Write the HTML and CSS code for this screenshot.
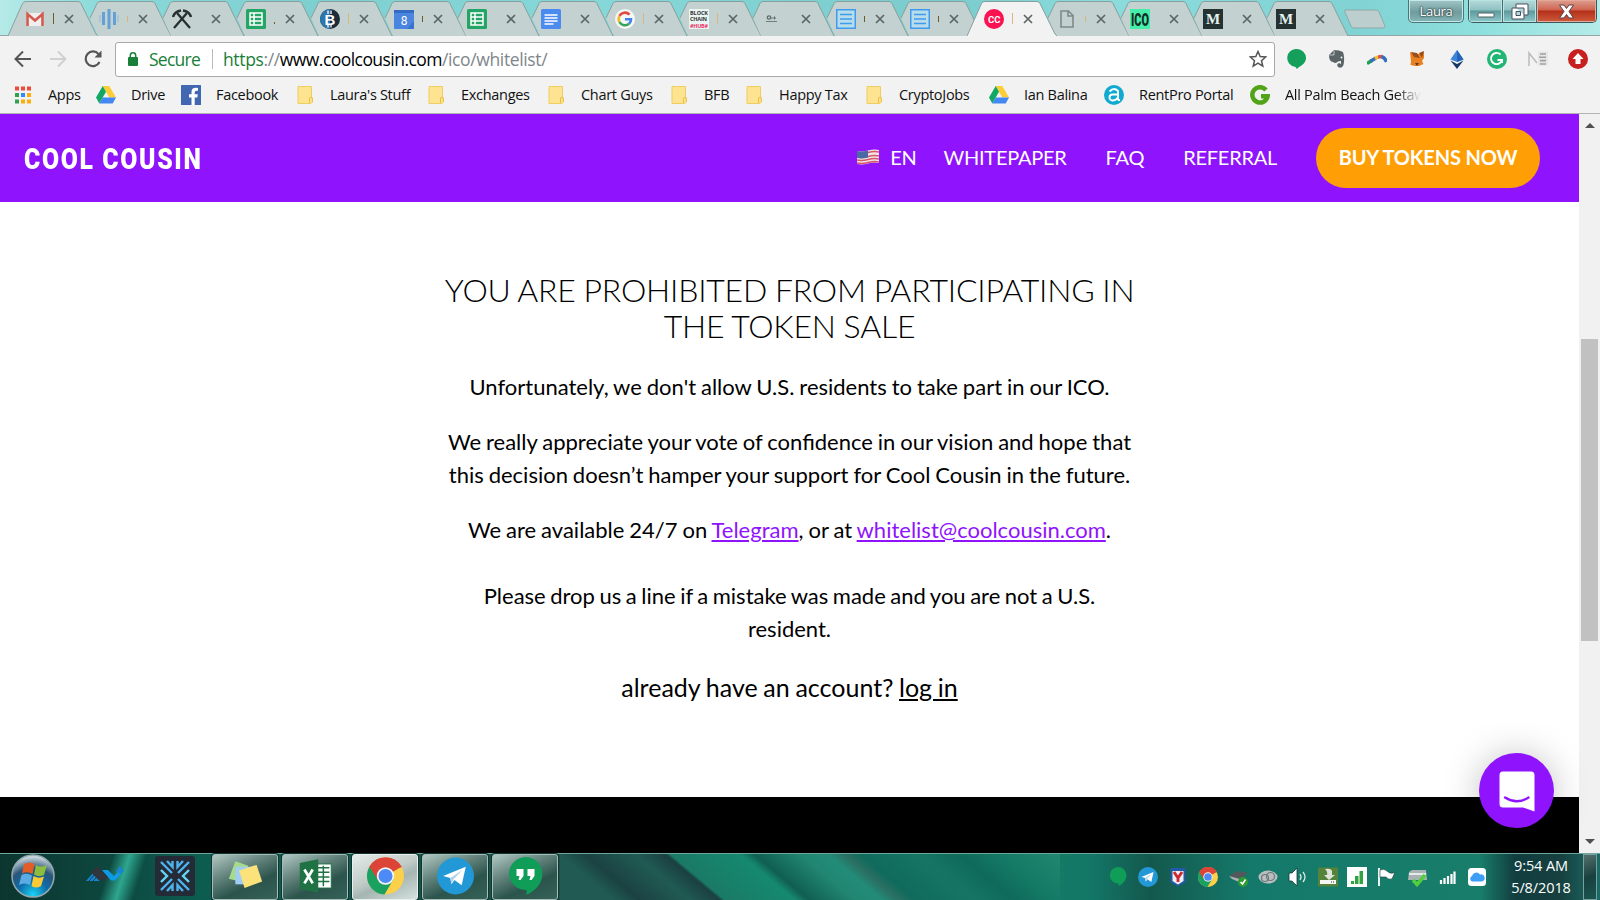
FILE: index.html
```html
<!DOCTYPE html>
<html lang="en">
<head>
    <meta charset="UTF-8">
    <meta name="viewport" content="width=device-width, initial-scale=1.0">
    <title>Cool Cousin - Whitelist</title>
    <link rel="stylesheet" href="styles.css">
</head>
<body>
    <!-- shared icons -->
    <svg class="sprite" width="0" height="0">
        <symbol id="tab" viewBox="0 0 90 36">
            <path d="M8 18 L15 3.500 Q16 1.500 18 1.500 H70 Q72 1.500 73 3.500 L88 34 L89 36 H16 Z" fill="#c3d2d1"/>
            <path d="M8 18 L15 3.500 Q16 1.500 18 1.500 H70 Q72 1.500 73 3.500 L88 34 L89 36" fill="none" stroke="#87a09f"/>
        </symbol>
        <symbol id="tab-full" viewBox="0 0 90 36">
            <path d="M0 36 L14.500 3.500 Q15.500 1.500 18 1.500 H70 Q72 1.500 73 3.500 L88 34 L90 36" fill="currentColor" stroke="#87a09f"/>
        </symbol>
        <symbol id="x" viewBox="0 0 10 10"><path d="M1 1 L9 9 M9 1 L1 9" stroke="#5b6665" stroke-width="1.700"/></symbol>
        <symbol id="sheet" viewBox="0 0 20 20">
            <rect width="20" height="20" rx="1.500" fill="#23a566"/>
            <path d="M4 4 H16 V16 H4 Z M4 8 H16 M4 12 H16 M8 4 V16" fill="none" stroke="#fff" stroke-width="1.500"/>
        </symbol>
        <symbol id="list" viewBox="0 0 20 20">
            <rect x="0.750" y="0.750" width="18.500" height="18.500" fill="#b9dcea" stroke="#3d9bf0" stroke-width="1.500"/>
            <path d="M4 5.500 H16 M4 10 H16 M4 14.500 H16" stroke="#3d9bf0" stroke-width="1.400"/>
        </symbol>
        <symbol id="folder" viewBox="0 0 16 18">
            <path d="M1 0.500 H14.500 V11 L15.500 12 V16 L14 17.500 H1 Z" fill="#fee391" stroke="#f0cd62"/>
            <path d="M12.500 17 V12 Q14 10.500 15.300 12 V16" fill="#fee391" stroke="#eabf45"/>
        </symbol>
        <symbol id="drive" viewBox="0 0 20 18">
            <path d="M6.700 0 L13.300 0 L20 11.500 H13.300 Z" fill="#fccd35"/>
            <path d="M6.700 0 L10 5.800 L3.300 17.400 L0 11.600 Z" fill="#11a861"/>
            <path d="M6.700 11.500 H20 L16.700 17.400 H3.300 Z" fill="#4387f5"/>
        </symbol>
        <symbol id="chrome" viewBox="0 0 36 36">
            <circle cx="18" cy="18" r="18" fill="#fdd04a"/>
            <path d="M18 18 L2.400 9 A18 18 0 0 1 33.600 9 Z" fill="#dc4437"/>
            <path d="M18 18 L2.400 9 A18 18 0 0 0 17 36 L26 21 Z" fill="#1aa15f"/>
            <path d="M18 9.500 H34 L33.600 9 A18 18 0 0 0 2.400 9 L10.500 22 Z" fill="#dc4437"/>
            <circle cx="18" cy="18" r="8.500" fill="#f3f3f3"/>
            <circle cx="18" cy="18" r="6.800" fill="#4c8bf5"/>
        </symbol>
        <symbol id="telegram" viewBox="0 0 36 36">
            <circle cx="18" cy="18" r="18" fill="#2398d6"/>
            <path d="M6 18 L28 9 L24 27 L17 22 L14 26 L13 20 Z" fill="#fff"/>
            <path d="M13 20 L25 12 L16 21.500 L14 26 Z" fill="#b4d3e6"/>
        </symbol>
        <symbol id="hangouts" viewBox="0 0 34 38">
            <path d="M17 0 A17 16.500 0 0 1 34 16.500 C34 27 26 34 18 38 V33 A17 16.500 0 0 1 17 0 Z" fill="#109d58"/>
        </symbol>
    </svg>

    <div class="tab-strip">
        <div class="tabs">
            <div class="tab">
                <svg class="tab-shape"><use href="#tab-full"/></svg>
                <svg class="favicon" viewBox="0 0 20 20"><rect x="1" y="4" width="18" height="13" fill="#efefef"/><path d="M2.500 17 V5 L10 11.500 L17.500 5 V17" fill="none" stroke="#d35a4f" stroke-width="2.600"/></svg>
                <i class="sliver dark"></i>
                <svg class="close"><use href="#x"/></svg>
            </div>
            <div class="tab">
                <svg class="tab-shape"><use href="#tab"/></svg>
                <svg class="favicon" viewBox="0 0 20 20"><path d="M4.500 3 V16 M10 0 V20 M15.500 3 V16" stroke="#62a0d6" stroke-width="3"/><path d="M1 6 V13 M19 6 V13" stroke="#8ebadc"/></svg>
                <i class="sliver short"></i>
                <svg class="close"><use href="#x"/></svg>
            </div>
            <div class="tab">
                <svg class="tab-shape"><use href="#tab"/></svg>
                <svg class="favicon" viewBox="0 0 20 20"><path d="M2 19 L15 4 M18 19 L5 4" stroke="#26302f" stroke-width="2.300"/><path d="M1 8 Q2.500 2.500 9 1.500 M11 1.500 Q17.500 2.500 19 8" fill="none" stroke="#26302f" stroke-width="2.500"/></svg>
                <i class="sliver none"></i>
                <svg class="close"><use href="#x"/></svg>
            </div>
            <div class="tab">
                <svg class="tab-shape"><use href="#tab"/></svg>
                <svg class="favicon"><use href="#sheet"/></svg>
                <i class="sliver dot"></i>
                <svg class="close"><use href="#x"/></svg>
            </div>
            <div class="tab">
                <svg class="tab-shape"><use href="#tab"/></svg>
                <svg class="favicon" viewBox="0 0 20 20"><circle cx="10" cy="10" r="10" fill="#1b2b3a"/><path d="M10 0 A10 10 0 0 0 10 20 Z" fill="#2c75ad"/><text x="10" y="15.500" text-anchor="middle" font-family="Liberation Sans, sans-serif" font-weight="bold" font-size="15" fill="#fff">B</text><path d="M8 1.500 V5 M11 1.500 V5 M8 15 V18.500 M11 15 V18.500" stroke="#fff" stroke-width="1.300"/></svg>
                <i class="sliver"></i>
                <svg class="close"><use href="#x"/></svg>
            </div>
            <div class="tab">
                <svg class="tab-shape"><use href="#tab"/></svg>
                <svg class="favicon" viewBox="0 0 20 20"><rect y="1" width="20" height="19" fill="#4a85e0"/><path d="M0 1 H20 V4 H0 Z" fill="#346bc3"/><path d="M13 20 L20 12 V20 Z" fill="#3a73cf"/><text x="10" y="16" text-anchor="middle" font-family="Roboto, sans-serif" font-size="12" fill="#fff">8</text></svg>
                <i class="sliver dark short"></i>
                <svg class="close"><use href="#x"/></svg>
            </div>
            <div class="tab">
                <svg class="tab-shape"><use href="#tab"/></svg>
                <svg class="favicon"><use href="#sheet"/></svg>
                <i class="sliver none"></i>
                <svg class="close"><use href="#x"/></svg>
            </div>
            <div class="tab">
                <svg class="tab-shape"><use href="#tab"/></svg>
                <svg class="favicon" viewBox="0 0 20 20"><rect width="20" height="20" rx="1.500" fill="#4b8bf0"/><path d="M3.500 6 H16.500 M3.500 9 H16.500 M3.500 12 H16.500 M3.500 15 H12.500" stroke="#fff" stroke-width="1.300"/></svg>
                <i class="sliver none"></i>
                <svg class="close"><use href="#x"/></svg>
            </div>
            <div class="tab">
                <svg class="tab-shape"><use href="#tab"/></svg>
                <svg class="favicon" viewBox="0 0 20 20"><circle cx="10" cy="10" r="10" fill="#f4f7f7"/><g fill="none" stroke-width="2.600"><path d="M4.500 6.800 A6.200 6.200 0 0 1 14.500 5.700" stroke="#e04a3f"/><path d="M4.500 6.800 A6.200 6.200 0 0 0 4.500 13" stroke="#f2bb2e"/><path d="M4.500 13 A6.200 6.200 0 0 0 14 14.800" stroke="#34a456"/><path d="M14 14.800 A6 6 0 0 0 16 10.200 H10" stroke="#4282ec"/></g></svg>
                <i class="sliver"></i>
                <svg class="close"><use href="#x"/></svg>
            </div>
            <div class="tab">
                <svg class="tab-shape"><use href="#tab"/></svg>
                <svg class="favicon" viewBox="0 0 20 20"><rect width="20" height="20" fill="#e9f5f3"/><g font-family="Open Sans, sans-serif" font-weight="bold" font-size="5.500" fill="#333"><text x="1" y="6" textLength="18">BLOCK</text><text x="1" y="12" textLength="17">CHAIN</text><text x="1" y="18.500" textLength="18" fill="#ee3065">#HUB#</text></g></svg>
                <i class="sliver"></i>
                <svg class="close"><use href="#x"/></svg>
            </div>
            <div class="tab">
                <svg class="tab-shape"><use href="#tab"/></svg>
                <svg class="favicon" viewBox="0 0 20 20"><path d="M4 12.500 H15 M9 9 H14" stroke="#6f7d7c"/><circle cx="7" cy="8.500" r="1.700" fill="none" stroke="#5f6a69" stroke-width="1.300"/><path d="M12.500 7.500 V10.500" stroke="#5f6a69"/></svg>
                <i class="sliver none"></i>
                <svg class="close"><use href="#x"/></svg>
            </div>
            <div class="tab">
                <svg class="tab-shape"><use href="#tab"/></svg>
                <svg class="favicon"><use href="#list"/></svg>
                <i class="sliver dark short"></i>
                <svg class="close"><use href="#x"/></svg>
            </div>
            <div class="tab">
                <svg class="tab-shape"><use href="#tab"/></svg>
                <svg class="favicon"><use href="#list"/></svg>
                <i class="sliver dark short"></i>
                <svg class="close"><use href="#x"/></svg>
            </div>
            <div class="tab active">
                <svg class="tab-shape"><use href="#tab-full"/></svg>
                <svg class="favicon" viewBox="0 0 20 20"><circle cx="10" cy="10" r="10" fill="#fb1250"/><text x="4" y="13.500" font-family="Roboto, sans-serif" font-weight="bold" font-size="9.500" textLength="12.500" fill="#fff">CC</text></svg>
                <i class="sliver"></i>
                <svg class="close"><use href="#x"/></svg>
            </div>
            <div class="tab">
                <svg class="tab-shape"><use href="#tab"/></svg>
                <svg class="favicon" viewBox="0 0 20 20"><path d="M4 2 H11.500 L16 6.500 V18 H4 Z M11 2 V7 H16" fill="none" stroke="#7f8988" stroke-width="1.600"/></svg>
                <i class="sliver short"></i>
                <svg class="close"><use href="#x"/></svg>
            </div>
            <div class="tab">
                <svg class="tab-shape"><use href="#tab"/></svg>
                <svg class="favicon ico" viewBox="0 0 20 20"><rect width="20" height="20" fill="#45efa9"/><text x="1" y="16.500" textLength="18" lengthAdjust="spacingAndGlyphs" font-family="Roboto, sans-serif" font-weight="900" font-size="18" fill="#142b25">ICO</text></svg>
                <i class="sliver none"></i>
                <svg class="close"><use href="#x"/></svg>
            </div>
            <div class="tab">
                <svg class="tab-shape"><use href="#tab"/></svg>
                <svg class="favicon" viewBox="0 0 20 20"><rect width="20" height="20" fill="#263131"/><text x="10" y="15" text-anchor="middle" font-family="Liberation Serif, serif" font-weight="bold" font-size="15" fill="#e4f1ef">M</text></svg>
                <i class="sliver none"></i>
                <svg class="close"><use href="#x"/></svg>
            </div>
            <div class="tab">
                <svg class="tab-shape"><use href="#tab"/></svg>
                <svg class="favicon" viewBox="0 0 20 20"><rect width="20" height="20" fill="#263131"/><text x="10" y="15" text-anchor="middle" font-family="Liberation Serif, serif" font-weight="bold" font-size="15" fill="#e4f1ef">M</text></svg>
                <i class="sliver none"></i>
                <svg class="close"><use href="#x"/></svg>
            </div>
        </div>
        <svg class="new-tab" viewBox="0 0 42 20"><path d="M1 1 H32 Q34 1 35 3 L41 17 Q41 19 39 19 H10 Q8 19 7 17 L0.500 2 Z" fill="#bccfce" stroke="#8fa9a8"/></svg>
        <div class="window-controls">
            <div class="user">Laura</div>
            <div class="control-group">
                <button class="minimize"><svg width="18" height="6"><rect x="1" y="1" width="16" height="4" rx="0.500" fill="#fff" stroke="#4f6264"/></svg></button>
                <button class="restore"><svg width="18" height="17" viewBox="0 0 18 17"><path d="M5 1 H17 V12 H13 V16 H1 V5 H5 Z" fill="#fff" stroke="#4a5064"/><path d="M5 5 H13 V12 M5 8.500 H9.500 V12.500 H5 Z" fill="#b4d8d8" stroke="#4a5064"/></svg></button>
                <button class="quit"><svg width="17" height="15" viewBox="0 0 17 15"><path d="M1.500 1 H6 L8.500 4.500 L11 1 H15.500 L11 7.500 L15.500 14 H11 L8.500 10.500 L6 14 H1.500 L6 7.500 Z" fill="#fff" stroke="#5a4048"/></svg></button>
            </div>
        </div>
    </div>

    <div class="toolbar">
        <div class="nav-buttons">
            <svg viewBox="0 0 18 18"><path d="M17 9 H2 M9 1.500 L1.500 9 L9 16.500" fill="none" stroke="#555" stroke-width="2"/></svg>
            <svg viewBox="0 0 18 18"><path d="M1 9 H16 M9 1.500 L16.500 9 L9 16.500" fill="none" stroke="#d0d0d0" stroke-width="2"/></svg>
            <svg viewBox="0 0 18 18"><path d="M15.500 12 A7.300 7.300 0 1 1 14.500 4" fill="none" stroke="#555" stroke-width="2.200"/><path d="M17.500 0.500 V7.500 H10.500 Z" fill="#555"/></svg>
        </div>
        <div class="address-bar">
            <svg class="lock" viewBox="0 0 10 14"><rect y="5" width="10" height="9" rx="1" fill="#188038"/><path d="M2.300 6 V3.500 A2.700 2.700 0 0 1 7.700 3.500 V6" fill="none" stroke="#188038" stroke-width="1.500"/></svg>
            <span class="secure">Secure</span>
            <span class="url"><span class="https">https</span>://<b>www.coolcousin.com</b>/ico/whitelist/</span>
            <svg class="star" viewBox="0 0 18 18"><path d="M9 1.500 L11.200 6.600 L16.700 7 L12.500 10.700 L13.800 16.200 L9 13.200 L4.200 16.200 L5.500 10.700 L1.300 7 L6.800 6.600 Z" fill="none" stroke="#555" stroke-width="1.500"/></svg>
        </div>
        <div class="extensions">
            <svg viewBox="0 0 20 20"><path d="M10 0 A9 9 0 0 1 19 9 C19 13 16 16 12 18 L10 20 L8.500 18 A9 9 0 0 1 10 0 Z" fill="#149f5a"/></svg>
            <svg viewBox="0 0 20 20"><path d="M2 6 L7 1 L12 1.500 L16 3 Q18 9 16.500 16 Q15 20 11 18 Q9 15 12 14 L14 15 V12 L11 12.500 Q9 15 6 13 Q2 13 2 6 Z" fill="#5b6568"/><path d="M2.500 6 H7 V1.500" fill="none" stroke="#f1f1f1" stroke-width="0.700"/><circle cx="14.500" cy="8.500" r="1" fill="#f1f1f1"/></svg>
            <svg viewBox="0 0 20 20"><g fill="none" stroke-width="3.500"><path d="M0 14.500 L5 11.500" stroke="#21a150"/><path d="M3.500 12.200 L9 9" stroke="#3370bd"/><path d="M8 9.500 L11 8" stroke="#f8bd28"/><path d="M11 8 L15 7.500" stroke="#df5140"/><path d="M14.500 7.500 Q18 8.500 19.500 13" stroke="#3370bd"/></g></svg>
            <svg viewBox="0 0 20 20"><path d="M3 3 L8 5 H13 L17 2.500 V9 L15 12 L16.500 15 L12 17 H8 L3.500 16 L4 12 Z" fill="#e88121"/><path d="M4 3 L10 4 L13 9 L7 8 Z M12 4 L17 2 L15 9 Z" fill="#9a4d1c"/><path d="M8 14 H12 L10 17 Z" fill="#5b3a28"/></svg>
            <svg viewBox="0 0 20 20"><path d="M10 1 L16.500 10.500 L10 13 L3.500 10.500 Z" fill="#3c85db"/><path d="M10 1 L16.500 10.500 L10 13 Z" fill="#2463b8"/><path d="M3.500 11.500 L10 15 L16.500 11.500 L10 20 Z" fill="#143763"/></svg>
            <svg viewBox="0 0 20 20"><circle cx="10" cy="10" r="10" fill="#23b574"/><path d="M13.500 5.500 A5.600 5.600 0 1 0 15 11 H10.500 M15 11 V14" fill="none" stroke="#fff" stroke-width="1.900"/></svg>
            <svg viewBox="0 0 20 20"><rect x="10" y="2.500" width="10" height="14" fill="#e6e6e6"/><path d="M1 17 V4 L9 14" fill="none" stroke="#bdbdbd" stroke-width="1.600"/><path d="M12 5 H18 M11 8.300 H18 M12 11.600 H18 M12 15 H18" stroke="#a0a0a0" stroke-width="1.600"/></svg>
            <svg viewBox="0 0 20 20"><circle cx="10" cy="10" r="10" fill="#c81f1f"/><path d="M10 4 L15.500 10 H12.500 V15 H7.500 V10 H4.500 Z" fill="#fff"/></svg>
        </div>
    </div>

    <div class="bookmarks">
        <a><svg viewBox="0 0 20 20"><g fill="#ef4a3d"><path d="M2 1.500h4v4h-4z M8 1.500h4v4h-4z M14 1.500h4v4h-4z"/></g><path d="M2 8h4v4h-4z M2 14.500h4v4h-4z" fill="#31a04f"/><path d="M8 8h4v4h-4z" fill="#2e8df5"/><path d="M14 8h4v4h-4z M8 14.500h4v4h-4z M14 14.500h4v4h-4z" fill="#f9ae0b"/></svg>Apps</a>
        <a><svg><use href="#drive" y="1" width="20" height="18"/></svg>Drive</a>
        <a><svg viewBox="0 0 20 20"><rect width="20" height="20" rx="0.500" fill="#4267b2"/><path d="M13.700 20 V12.500 H16.300 L16.800 9.300 H13.700 V7.300 Q13.700 5.700 15.400 5.700 H17 V3 Q10.500 2 10.500 7 V9.300 H8 V12.500 H10.500 V20 Z" fill="#fff"/></svg>Facebook</a>
        <a><svg><use href="#folder" x="2" y="1" width="16" height="18"/></svg>Laura's Stuff</a>
        <a><svg><use href="#folder" x="2" y="1" width="16" height="18"/></svg>Exchanges</a>
        <a><svg><use href="#folder" x="2" y="1" width="16" height="18"/></svg>Chart Guys</a>
        <a><svg><use href="#folder" x="2" y="1" width="16" height="18"/></svg>BFB</a>
        <a><svg><use href="#folder" x="2" y="1" width="16" height="18"/></svg>Happy Tax</a>
        <a><svg><use href="#folder" x="2" y="1" width="16" height="18"/></svg>CryptoJobs</a>
        <a><svg><use href="#drive" y="1" width="20" height="18"/></svg>Ian Balina</a>
        <a><svg viewBox="0 0 20 20"><circle cx="10" cy="10" r="10" fill="#10aad0"/><path d="M5.500 6.500 Q10 2 14 6 V14 Q14 15.500 16 15 M14 9.500 H8.500 A3 3 0 0 0 8.500 15.500 Q12 15.500 14 12.500" fill="none" stroke="#fff" stroke-width="1.900"/></svg>RentPro Portal</a>
        <a class="fade"><svg viewBox="0 0 20 20"><path d="M16 5 A7.700 7.700 0 1 0 17.600 11.300 H11" fill="none" stroke="#53a318" stroke-width="4.500"/></svg>All Palm Beach Getaw</a>
    </div>

    <div class="viewport">
        <div class="page">
            <header>
                <div class="logo"><span>COOL COUSIN</span></div>
                <nav>
                    <a class="lang">
                        <svg viewBox="0 0 24 16"><path d="M1 2 Q6 3 12 1.500 T23 1 V14 Q18 13 12 14.500 T1 15 Z" fill="#f2e4e6"/><path d="M1 4 Q6 5 12 3.500 T23 3 M1 8 Q6 9 12 7.500 T23 7 M1 11 Q6 12 12 10.500 T23 10 M1 14 Q6 15 12 13.500 T23 13" fill="none" stroke="#d4566a" stroke-width="1.500"/><path d="M1 2 Q6 3 12 1.500 V8.500 Q6 10 1 9 Z" fill="#4a6aa5"/></svg>
                        EN
                    </a>
                    <a>WHITEPAPER</a>
                    <a>FAQ</a>
                    <a>REFERRAL</a>
                    <a class="buy">BUY TOKENS NOW</a>
                </nav>
            </header>
            <main>
                <h1>YOU ARE PROHIBITED FROM PARTICIPATING IN<br>THE TOKEN SALE</h1>
                <p>Unfortunately, we don't allow U.S. residents to take part in our ICO.</p>
                <p>We really appreciate your vote of confidence in our vision and hope that<br>this decision doesn’t hamper your support for Cool Cousin in the future.</p>
                <p>We are available 24/7 on <a href="#">Telegram</a>, or at <a href="#">whitelist@coolcousin.com</a>.</p>
                <p class="note">Please drop us a line if a mistake was made and you are not a U.S.<br>resident.</p>
                <p class="login">already have an account? <a href="#">log in</a></p>
            </main>
            <footer></footer>
            <button class="chat"><svg viewBox="0 0 36 41"><path d="M4 0.500 H32 Q35.500 0.500 35.500 4 V40.500 L24 36.500 H4 Q0.500 36.500 0.500 33 V4 Q0.500 0.500 4 0.500 Z" fill="#fff"/><path d="M6 26.500 Q18 34 29.500 26.500" fill="none" stroke="#8f13fd" stroke-width="2.300" stroke-linecap="round"/></svg></button>
        </div>
        <div class="scrollbar">
            <svg width="10" height="5"><path d="M0 5 L5 0 L10 5 Z" fill="#505050"/></svg>
            <div class="track"><div class="thumb"></div></div>
            <svg width="10" height="5"><path d="M0 0 L5 5 L10 0 Z" fill="#505050"/></svg>
        </div>
    </div>

    <div class="taskbar">
        <div class="start"><svg viewBox="0 0 44 44"><defs><radialGradient id="orb" cx="50%" cy="95%" r="90%"><stop offset="0" stop-color="#17d5f5"/><stop offset="0.400" stop-color="#0f6ba8"/><stop offset="0.700" stop-color="#2b5576"/><stop offset="1" stop-color="#c5d3da"/></radialGradient></defs><circle cx="22" cy="22" r="21" fill="url(#orb)" stroke="#93a9b2" stroke-width="1.500"/><path d="M13 10 Q18 7 23.500 10 L21.500 20 Q16 17 11 19.500 Z" fill="#e35d26"/><path d="M25 11 Q30 14 36 11 L33 21 Q28 23.500 23 20.500 Z" fill="#8cbd3d"/><path d="M10.500 21 Q16 18.500 21 21.500 L19 31 Q13 28 8 31 Z" fill="#5cabe2"/><path d="M22.500 22 Q28 25 33 22.500 L30 32 Q25 35 20.500 32 Z" fill="#fbc934"/></svg></div>
        <div class="pinned">
            <svg width="38" height="20" viewBox="0 0 38 20"><path d="M0 15 L7 7 L14 15 Z" fill="#1686d9"/><path d="M3 15 L8.500 8.500 M7 15 L10.500 11" stroke="#10443f" stroke-width="1"/><path d="M5 6.500 L12 0 L22 12 L18 14.500 H13 Z" fill="#30363b"/><path d="M16 4 H22 L28 10 L33 5 L35 8 L29 14.500 H25 Z" fill="#0f9ae8"/><path d="M30 5 L34 0 L38 5 L34.500 8 Z" fill="#1a83cf"/></svg>
            <svg width="40" height="40" viewBox="0 0 40 40"><rect width="40" height="40" rx="3" fill="#242b36"/><g fill="none" stroke="#4fb3f0" stroke-width="2.400"><path d="M6 6 L17 17 M34 6 L23 17 M6 34 L17 23 M34 34 L23 23"/><path d="M12 5 L17.500 11 V5 M28 5 L22.500 11 V5 M12 35 L17.500 29 V35 M28 35 L22.500 29 V35"/><path d="M6 14 L12 20 L6 26 M34 14 L28 20 L34 26" stroke="#63d6f5"/></g></svg>
        </div>
        <div class="task-buttons">
            <div class="task"><svg viewBox="0 0 40 38"><path d="M9 3 L23 8 L18 26 L2 22 Z" fill="#a6db8a"/><path d="M9 9 H28 V28 H9 Z" fill="#9fcdf4"/><path d="M13 13 L32 7 L38 25 L19 32 Z" fill="#fce27a"/></svg></div>
            <div class="task"><svg viewBox="0 0 40 38"><rect x="20" y="6" width="17" height="26" fill="#fff" stroke="#1f7244"/><path d="M22 10 H35 M22 15 H35 M22 20 H35 M22 25 H35 M28.500 8 V30" stroke="#1f7244" stroke-width="1.600"/><path d="M3 5 L23 1 V37 L3 33 Z" fill="#1f7244"/><path d="M8 12 L17 27 M17 12 L8 27" stroke="#fff" stroke-width="3"/></svg></div>
            <div class="task current"><svg><use href="#chrome"/></svg></div>
            <div class="task"><svg><use href="#telegram"/></svg></div>
            <div class="task"><svg viewBox="0 0 34 38"><use href="#hangouts"/><path d="M8 12 H15 V19 L12 23 H10 L11 19 H8 Z M19 12 H26 V19 L23 23 H21 L22 19 H19 Z" fill="#fff"/></svg></div>
        </div>
        <div class="tray">
            <svg viewBox="0 0 20 20"><use href="#hangouts" width="20" height="19"/></svg>
            <svg><use href="#telegram"/></svg>
            <svg viewBox="0 0 20 20"><path d="M2.500 1 H17.500 V15 L10 19.500 L2.500 15 Z" fill="#2458a8"/><path d="M4.500 4 H15.500 V14 L10 17.500 L4.500 14 Z" fill="#eaf0f4"/><path d="M6 5 L10 11 L14 5 M10 10 V15" fill="none" stroke="#d22630" stroke-width="2.800"/></svg>
            <svg><use href="#chrome"/></svg>
            <svg viewBox="0 0 20 20"><path d="M1 9 L9 4 L20 6 L12 12 Z" fill="#53595b"/><path d="M1 9 L12 12 L11 15 L4 12 Z" fill="#a9b1b2"/><circle cx="15" cy="15" r="5" fill="#2e9b35"/><path d="M12.500 15 L14.500 17 L17.500 12.500" fill="none" stroke="#fff" stroke-width="1.500"/></svg>
            <svg viewBox="0 0 20 20"><ellipse cx="10" cy="10" rx="9.500" ry="6.500" fill="#b9bebf"/><g fill="none" stroke="#6d7879" stroke-width="1.200"><circle cx="7" cy="11" r="3.500"/><circle cx="12.500" cy="9.500" r="4"/></g></svg>
            <svg viewBox="0 0 20 20"><path d="M1 6 H4 L9 1 V19 L4 14 H1 Z" fill="#fff" stroke="#173a35" stroke-width="0.800"/><path d="M12 7 Q14 10 12 13 M15 5 Q19 10 15 15" fill="none" stroke="#d8e8e5" stroke-width="1.300"/></svg>
            <svg viewBox="0 0 20 20"><rect y="0.500" width="20" height="19" rx="1" fill="#55833b"/><path d="M7 2 Q13 1 14 4 V8 H17 L11 13 L6 8 H9 Q10 5 7 2 Z" fill="#dce4da"/><rect x="2" y="13" width="16" height="4" fill="#f3f6f2"/><path d="M13 15 H17" stroke="#333" stroke-dasharray="1 1"/></svg>
            <svg viewBox="0 0 20 20"><rect width="20" height="20" fill="#fff"/><path d="M4 14 H7 V17 H4 Z M8 9 H11.500 V17 H8 Z M12.500 4 H16 V17 H12.500 Z" fill="#2fa53f"/></svg>
            <svg viewBox="0 0 20 20"><path d="M2 1 V19" stroke="#fff" stroke-width="1.800"/><path d="M3 3 Q7 1 10 4 Q14 8 18 5 L15 12 Q11 13 9 10 H3 Z" fill="#fff" stroke="#173a35" stroke-width="0.600"/></svg>
            <svg viewBox="0 0 20 20"><path d="M2 5 L5 3 H19 L20 13 H1 Z" fill="#aab3b3"/><path d="M2 7 H19" stroke="#e7eaea" stroke-width="2"/><path d="M6 13 L10 17.500 L18 8" fill="none" stroke="#52cf3e" stroke-width="3.500"/></svg>
            <svg viewBox="0 0 20 20"><path d="M4 17 V13 M7.500 17 V11 M11 17 V9 M14.500 17 V7 M17.500 17 V4.500" stroke="#fff" stroke-width="2.200"/></svg>
            <svg viewBox="0 0 20 20"><rect x="1" y="1" width="18" height="18" rx="3.500" fill="#fff"/><path d="M5 14.500 A3 3 0 0 1 5 9 A4.500 4.500 0 0 1 13 7.500 A3.600 3.600 0 0 1 15 14.500 Z" fill="#3e9df5"/></svg>
        </div>
        <div class="clock"><span>9:54 AM</span><span>5/8/2018</span></div>
        <div class="show-desktop"></div>
    </div>
</body>
</html>
```

FILE: styles.css
```css
* {
    margin: 0;
    padding: 0;
    box-sizing: border-box;
}

body {
    width: 1600px;
    height: 900px;
    overflow: hidden;
    display: flex;
    flex-direction: column;
    font-family: "Open Sans", sans-serif;
    background: #fff;
}

svg {
    display: block;
    flex: none;
}

button {
    border: none;
    background: none;
}

.sprite {
    position: absolute;
}

/* tabs */
.tab-strip {
    height: 36px;
    flex: none;
    display: flex;
    padding-left: 8px;
    background: linear-gradient(90deg, #b5eae8 0, #8bdada 100px, #7ecfd0 300px, #86d8d8 600px, #79cbcc 950px, #8cdcdc 1100px, #80d2d3 1350px, #8ee0de 1480px, #b5ebe8 1600px);
    border-bottom: 1px solid #93a5a4;
}

.tabs {
    display: flex;
    color: #c3d2d1;
}

.tab {
    position: relative;
    width: 90px;
    height: 36px;
    margin-right: -16.28px;
    padding: 9px 0 0 17px;
    display: flex;
    flex: none;
}

.tab.active {
    z-index: 1;
    color: #f2f2f2;
}

.tab.active ~ .tab {
    margin-right: -17.2px;
}

.tab-shape {
    position: absolute;
    left: 0;
    top: 0;
    width: 90px;
    height: 36px;
}

.favicon {
    position: relative;
    width: 20px;
    height: 20px;
}

.favicon.ico {
    overflow: visible;
}

.sliver {
    width: 1px;
    height: 11px;
    margin: 4px 10px 0 8px;
    background: #d9b67c;
    position: relative;
}

.sliver.dark {
    background: #6e5a2c;
}

.sliver.short {
    height: 6px;
    margin-top: 7px;
}

.sliver.dot {
    height: 2px;
    margin-top: 13px;
    background: #6e5a2c;
}

.sliver.none {
    background: none;
}

.close {
    position: relative;
    width: 10px;
    height: 10px;
    margin-top: 5px;
}

.new-tab {
    width: 42px;
    height: 20px;
    margin: 9px 0 0 12px;
}

.window-controls {
    margin-left: auto;
    margin-right: 3px;
    display: flex;
    gap: 4px;
}

.user {
    width: 56px;
    height: 23px;
    border: 1px solid #4f7476;
    border-top: none;
    border-radius: 0 0 5px 5px;
    box-shadow: inset 0 0 0 1px #c3eaea;
    background: linear-gradient(#a3c6c7, #6f9c9e 55%, #84b5b6);
    color: #fff;
    font-size: 13px;
    letter-spacing: -0.3px;
    line-height: 22px;
    text-align: center;
    text-shadow: 0 0 2px #233, 0 0 2px #233;
}

.control-group {
    display: flex;
    height: 23px;
    border: 1px solid #39595c;
    border-top: none;
    border-radius: 0 0 5px 5px;
    overflow: hidden;
}

.control-group button {
    display: flex;
    align-items: center;
    justify-content: center;
    width: 34px;
    background: linear-gradient(#b6dada, #8fc1c2 45%, #5e9a9c 50%, #8dc9ca);
    border-right: 1px solid #4a6c6f;
    box-shadow: inset 0 0 0 1px #b9e4e4;
}

.control-group .minimize svg {
    margin-top: 8px;
}

.control-group .quit {
    width: 59px;
    border-right: none;
    background: linear-gradient(#dd9f90, #cf6450 45%, #b3301a 50%, #cf5a3c);
    box-shadow: inset 0 0 0 1px #e5a99b;
}

/* toolbar */
.toolbar {
    height: 44px;
    flex: none;
    display: flex;
    align-items: center;
    padding: 2px 0 0 14px;
    background: #f2f2f2;
}

.nav-buttons {
    width: 101px;
    display: flex;
    gap: 17px;
}

.nav-buttons svg {
    width: 18px;
    height: 18px;
}

.address-bar {
    width: 1160px;
    height: 35px;
    display: flex;
    align-items: center;
    padding: 0 7px 0 12px;
    background: #fff;
    border: 1px solid #a9a9a9;
    border-radius: 3px;
    font-size: 17.5px;
    white-space: nowrap;
}

.lock {
    width: 10px;
    height: 14px;
    margin-right: 11px;
}

.secure {
    width: 64px;
    color: #188038;
    border-right: 1px solid #bbb;
    line-height: 20px;
    letter-spacing: -0.75px;
}

.url {
    margin-left: 10px;
    color: #80868b;
    letter-spacing: -0.36px;
    padding-bottom: 1px;
}

.url .https {
    color: #188038;
}

.url b {
    font-weight: normal;
    color: #000;
    letter-spacing: -0.55px;
}

.star {
    width: 18px;
    height: 18px;
    margin-left: auto;
}

.extensions {
    display: grid;
    grid-template-columns: repeat(8, 20px);
    gap: 20.1px;
    margin-left: 12px;
}

.extensions svg {
    width: 20px;
    height: 20px;
}

/* bookmarks bar */
.bookmarks {
    height: 34px;
    flex: none;
    display: grid;
    grid-template-columns: 83px 85px 114px 131px 120px 123px 75px 120px 125px 115px 146px 172px;
    align-items: center;
    padding: 0 0 4px 13px;
    background: #f2f2f2;
    border-bottom: 1px solid #b3b3b3;
    font-size: 14.5px;
    letter-spacing: -0.3px;
    color: #111;
    white-space: nowrap;
}

.bookmarks a {
    display: flex;
    align-items: center;
    gap: 15px;
}

.bookmarks svg {
    width: 20px;
    height: 20px;
}

.bookmarks .fade {
    -webkit-mask-image: linear-gradient(90deg, #000 145px, transparent 171px);
    mask-image: linear-gradient(90deg, #000 145px, transparent 171px);
}

/* page */
.viewport {
    height: 739px;
    flex: none;
    display: flex;
}

.page {
    position: relative;
    width: 1579px;
    display: flex;
    flex-direction: column;
    font-family: Lato, sans-serif;
}

header {
    height: 88px;
    flex: none;
    display: flex;
    align-items: center;
    justify-content: space-between;
    padding: 0 39px 0 24px;
    background: #8f13fd;
    color: #fff;
}

.logo {
    font-family: Roboto, sans-serif;
    font-weight: 900;
    font-size: 30px;
    letter-spacing: 2px;
    padding-top: 1px;
}

.logo span {
    display: inline-block;
    transform: scaleX(0.826);
    transform-origin: left;
}

nav {
    display: flex;
    align-items: center;
    gap: 39px;
    font-size: 20px;
    letter-spacing: -0.25px;
}

nav a {
    padding-bottom: 2px;
}

.lang {
    display: flex;
    align-items: center;
    gap: 10px;
    margin-right: -12px;
}

.lang svg {
    width: 24px;
    height: 16px;
}

.buy {
    width: 224px;
    height: 60px;
    line-height: 58px;
    border-radius: 30px;
    background: #ff9f05;
    text-align: center;
    font-weight: bold;
    letter-spacing: -0.15px;
}

main {
    height: 595px;
    flex: none;
    padding-top: 70px;
    text-align: center;
    font-size: 22px;
    line-height: 33px;
    word-spacing: -0.7px;
    color: #000;
}

h1 {
    font-size: 32px;
    line-height: 36px;
    font-weight: 300;
    letter-spacing: -0.2px;
    margin-bottom: 26px;
}

main p {
    margin-bottom: 22px;
}

main p a {
    color: #8f13fd;
}

.note {
    padding-top: 11px;
    word-spacing: -1.1px;
}

main .login {
    padding-top: 1px;
    font-size: 25px;
    line-height: 39px;
}

main .login a {
    color: #000;
}

footer {
    flex: 1;
    background: #000;
}

.chat {
    position: absolute;
    right: 25px;
    bottom: 25px;
    width: 75px;
    height: 75px;
    border-radius: 50%;
    background: #8f13fd;
    box-shadow: 0 2px 36px rgba(0, 0, 0, 0.25);
    display: flex;
    align-items: center;
    justify-content: center;
}

.chat svg {
    width: 36px;
    height: 41px;
    margin-top: 2px;
}

.scrollbar {
    width: 21px;
    display: flex;
    flex-direction: column;
    align-items: center;
    padding: 9px 0;
    background: #f1f1f1;
}

.track {
    flex: 1;
    padding-top: 211px;
}

.thumb {
    width: 17px;
    height: 302px;
    background: #c1c1c1;
}

/* windows taskbar */
.taskbar {
    height: 47px;
    flex: none;
    display: flex;
    align-items: center;
    border-top: 1px solid #6fa79e;
    background:
        linear-gradient(108deg, transparent 108px, rgba(60, 205, 175, 0.7) 124px, transparent 140px),
        linear-gradient(40deg, #205a52 35px, #1b4242 51px, #205a53 83px, #1b4042 103px, #1a7a66 106px, #15896f 151px, #105f52 160px, #218672 190px, #228c78 207px, #2a6f62 218px, #106b5d 228px, #157565 266px, #0f6a5a 292px, #147a66 318px, #22876f 356px) 560px 0 / 500px 46px no-repeat,
        linear-gradient(90deg, #0c352f 0, #0d4b42 130px, #0c5d50 200px, #145349 420px, #1b4f4a 570px, #147a66 1060px, #127767 1090px, #14584d 1150px, #14796a 1250px, #187e6a 1480px, #123e40 1515px, #17403f 1560px, #1a6b68 1600px);
}

.start {
    padding-left: 11px;
    width: 75px;
}

.start svg {
    width: 44px;
    height: 44px;
    margin-bottom: 2px;
}

.pinned {
    display: flex;
    align-items: center;
    gap: 31px;
    width: 137px;
    padding: 0 0 2px 11px;
}

.task-buttons {
    display: flex;
    gap: 4px;
}

.task {
    width: 66px;
    height: 46px;
    display: flex;
    align-items: center;
    justify-content: center;
    padding-bottom: 2px;
    border: 1px solid #a4bdb8;
    border-radius: 3px;
    background: linear-gradient(155deg, #b1c7c2 0, #65857e 35%, #2b544c 65%, #356259);
    box-shadow: 0 0 0 1px #12352f;
}

.task svg {
    width: 37px;
    height: 38px;
}

.task.current {
    background: linear-gradient(155deg, #e5ebe9, #c0cbc8 45%, #a5b5b1 60%, #d5e1de);
    border-color: #e8f0ee;
}

.tray {
    margin-left: auto;
    display: grid;
    grid-template-columns: repeat(13, 20px);
    gap: 9.9px;
}

.tray svg {
    width: 20px;
    height: 20px;
}

.clock {
    width: 96px;
    display: flex;
    flex-direction: column;
    align-items: center;
    color: #fff;
    font-size: 14.5px;
    line-height: 22px;
    letter-spacing: -0.1px;
    padding-left: 12px;
}

.show-desktop {
    width: 14px;
    height: 46px;
    margin-right: 3px;
    border: 1px solid #76a09a;
    background: linear-gradient(160deg, #54706d, #18403e 50%, #1c5551);
}
```
